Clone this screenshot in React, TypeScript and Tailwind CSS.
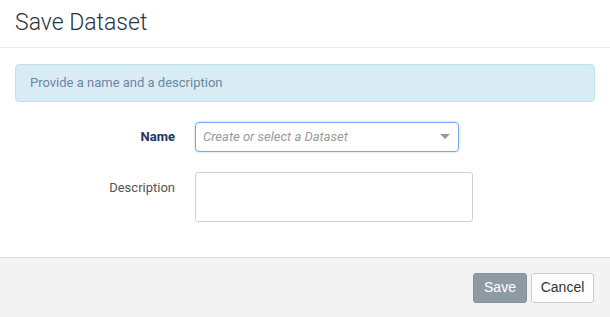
import React from "react";

export default function App() {
  return (
    <div className="w-[610px] h-[317px] bg-white flex flex-col overflow-hidden" style={{ fontFamily: "Roboto, 'Liberation Sans', sans-serif" }}>
      <div className="h-[48px] border-b border-[#e9ebee] px-[15px] flex items-center">
        <h1 className="text-[23px] leading-none text-[#2b3541] font-light -mt-[2px]">Save Dataset</h1>
      </div>
      <div className="px-[15px] pt-[16px] flex-1">
        <div className="h-[38px] rounded-[4px] border border-[#bfe3ee] bg-[#d9ecf6] flex items-center px-[14px] text-[13px] text-[#6a879f]">
          Provide a name and a description
        </div>
        <div className="mt-[20px] flex items-center">
          <label className="w-[160px] text-right text-[13px] font-bold text-[#1c3567]">Name</label>
          <div className="ml-[20px] w-[264px] h-[30px] rounded-[4px] border border-[#78a5f1] shadow-[0_0_2px_rgba(80,140,240,0.5)] flex items-center justify-between pl-[7px] pr-[7px]">
            <span className="text-[13px] italic text-[#9a9a9a]">Create or select a Dataset</span>
            <svg width="10" height="6" viewBox="0 0 10 6" className="mr-[1px]"><path d="M0 0 L10 0 L5 5 Z" fill="#999" /></svg>
          </div>
        </div>
        <div className="mt-[20px] flex items-start">
          <label className="w-[160px] text-right text-[13px] text-[#555] pt-[6px]">Description</label>
          <div className="ml-[20px] w-[278px] h-[50px] rounded-[3px] border border-[#cfcfcf]" />
        </div>
      </div>
      <div className="h-[60px] border-t border-[#dcdcdc] bg-[#f3f3f3] flex items-center justify-end pr-[16px] gap-[4px]" style={{ fontFamily: "'Liberation Sans', Arial, sans-serif" }}>
        <button className="w-[54px] h-[30px] rounded-[3px] bg-[#8f9ba4] border border-[#86929b] text-white text-[14px]">Save</button>
        <button className="w-[63px] h-[30px] rounded-[3px] bg-white border border-[#cccccc] text-[#333] text-[14px]">Cancel</button>
      </div>
    </div>
  );
}
